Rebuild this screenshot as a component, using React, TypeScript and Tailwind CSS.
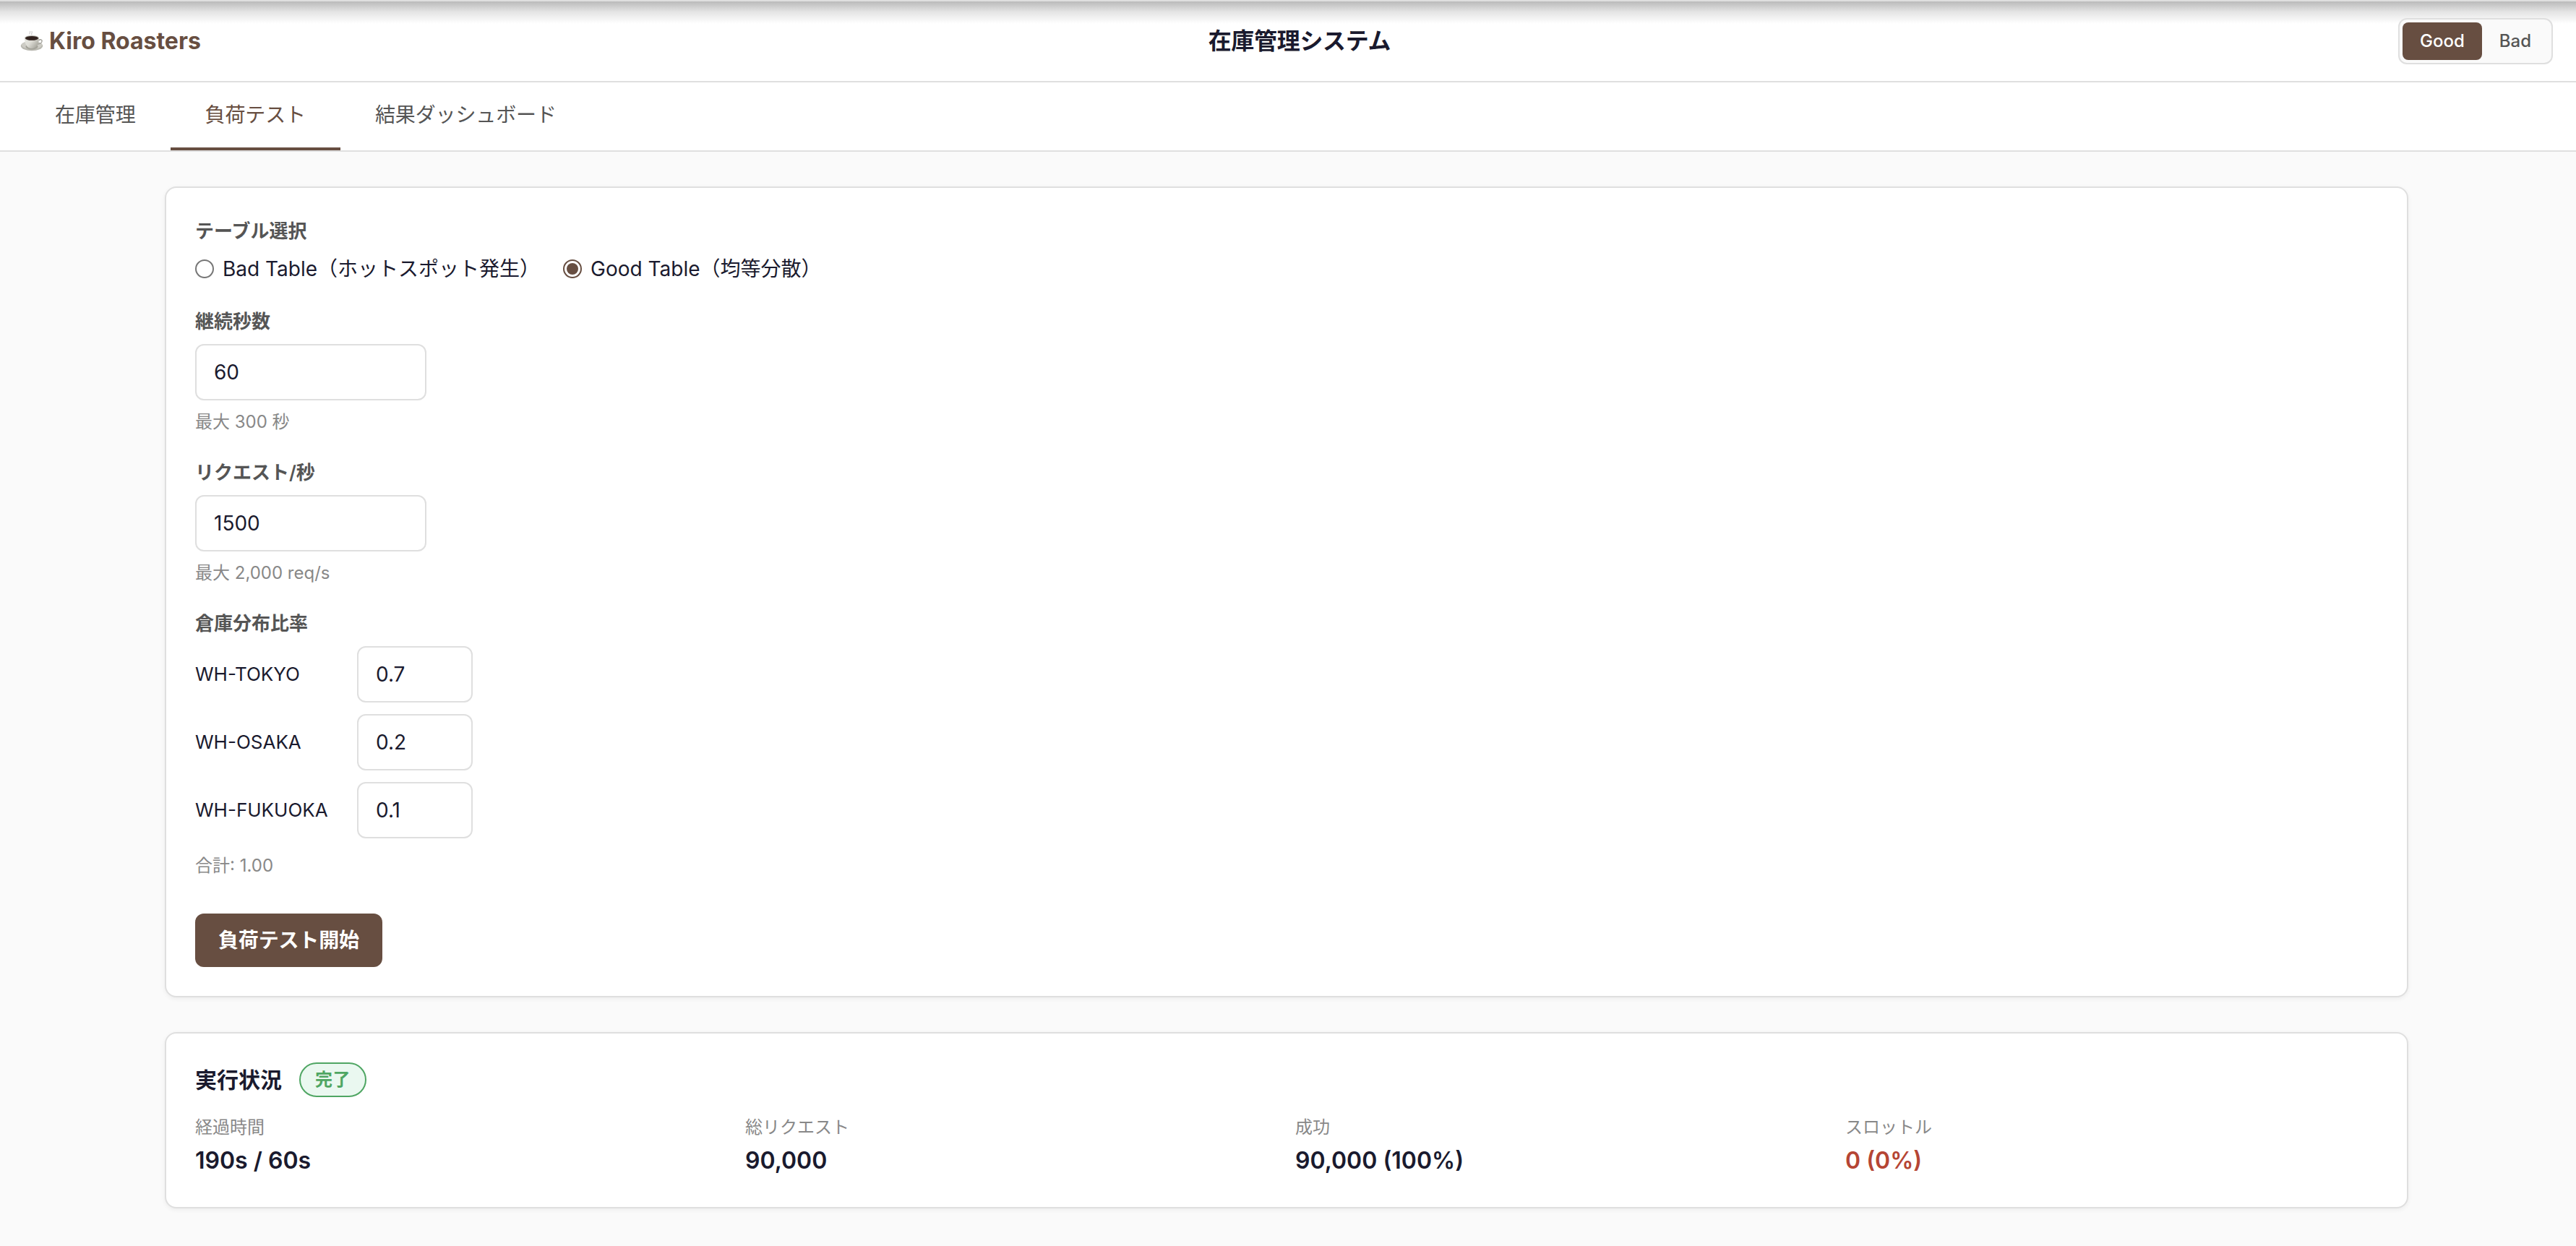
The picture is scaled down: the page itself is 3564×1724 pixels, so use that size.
import React, { useState } from 'react';

interface Warehouse {
    id: string;
    ratio: string;
}

interface Stat {
    label: string;
    value: string;
    danger?: boolean;
}

const tabs = ['在庫管理', '負荷テスト', '結果ダッシュボード'];

const stats: Stat[] = [
    { label: '経過時間', value: '190s / 60s' },
    { label: '総リクエスト', value: '90,000' },
    { label: '成功', value: '90,000 (100%)' },
    { label: 'スロットル', value: '0 (0%)', danger: true },
];

const CoffeeIcon = () => (
    <svg width="32" height="30" viewBox="0 0 32 30" fill="none" className="shrink-0">
        <defs>
            <linearGradient id="cup" x1="0" y1="0" x2="1" y2="0.6">
                <stop offset="0" stopColor="#e9e9e4" />
                <stop offset="0.5" stopColor="#dddcd5" />
                <stop offset="1" stopColor="#a9a89f" />
            </linearGradient>
        </defs>
        {/* steam */}
        <path d="M13 5c-1-1.500 1.500-2 .5-3.500M16 6c-1.500-2 1.500-2.500 0-4.500" stroke="#cfcfcf" strokeWidth="1.200" strokeLinecap="round" />
        {/* saucer */}
        <ellipse cx="16" cy="21.500" rx="15.200" ry="6.800" fill="#b9b8b0" />
        <ellipse cx="16" cy="20.300" rx="14" ry="5.500" fill="#cdccc5" />
        <ellipse cx="16" cy="22.500" rx="8.500" ry="4" fill="#a3a299" />
        {/* cup */}
        <path d="M25.500 14c2-2 5-1.500 4.600 1-.4 2.500-3.200 3.800-6 4" stroke="#9c9b93" strokeWidth="1.300" />
        <path d="M6 10.500c0 8.500 3.500 14.500 10 14.500s10-6 10-14.500z" fill="url(#cup)" />
        <ellipse cx="16" cy="10.500" rx="10" ry="3.600" fill="#bdbcb4" />
        <ellipse cx="16" cy="10.900" rx="9" ry="2.900" fill="#32231f" />
    </svg>
);

const Card: React.FC<{ children: React.ReactNode }> = ({ children }) => (
    <section className="rounded-2xl border-2 border-[#dfdfdf] bg-white p-10 shadow-[0_2px_6px_rgba(0,0,0,0.06)]">
        {children}
    </section>
);

const FieldLabel: React.FC<{ children: React.ReactNode }> = ({ children }) => (
    <div className="mb-3 text-[26px] leading-[39px] font-semibold text-[#555555]">{children}</div>
);

const Hint: React.FC<{ children: React.ReactNode }> = ({ children }) => (
    <div className="text-2xl leading-9 text-[#888888]">{children}</div>
);

interface NumberInputProps {
    value: string;
    onChange: (value: string) => void;
    label: string;
    small?: boolean;
}

const NumberInput: React.FC<NumberInputProps> = ({ value, onChange, label, small }) => (
    <input
        type="text"
        aria-label={label}
        value={value}
        onChange={e => onChange(e.target.value)}
        className={`block h-[78px] rounded-xl border-2 border-[#dfdfdf] bg-white px-6 text-[28px] text-[#1a1a2e] outline-none ${small ? 'w-40' : 'w-80'}`}
    />
);

interface RadioProps {
    checked: boolean;
    onSelect: () => void;
    children: React.ReactNode;
}

const Radio: React.FC<RadioProps> = ({ checked, onSelect, children }) => (
    <button type="button" role="radio" aria-checked={checked} onClick={onSelect} className="flex items-center gap-3 whitespace-nowrap">
        <span className={`flex size-[26px] items-center justify-center rounded-full border-2 ${checked ? 'border-[#674e41]' : 'border-[#767676]'}`}>
            {checked && <span className="size-4 rounded-full bg-[#674e41]" />}
        </span>
        <span>{children}</span>
    </button>
);

const App: React.FC = () => {
    const [mode, setMode] = useState('Good');
    const [activeTab, setActiveTab] = useState('負荷テスト');
    const [table, setTable] = useState('good');
    const [duration, setDuration] = useState('60');
    const [rate, setRate] = useState('1500');
    const [warehouses, setWarehouses] = useState<Warehouse[]>([
        { id: 'WH-TOKYO', ratio: '0.7' },
        { id: 'WH-OSAKA', ratio: '0.2' },
        { id: 'WH-FUKUOKA', ratio: '0.1' },
    ]);

    const total = warehouses.reduce((sum, w) => sum + (Number(w.ratio) || 0), 0);

    const updateRatio = (id: string, ratio: string) => {
        setWarehouses(prev => prev.map(w => (w.id === id ? { ...w, ratio } : w)));
    };

    return (
        <div lang="ja" className="min-h-[1724px] bg-[#fafafa] font-['Inter','Noto_Sans_CJK_JP',sans-serif] text-[28px] leading-[42px] text-[#1a1a2e]">
            <div className="bg-white">
                <header className="flex h-[114px] items-center justify-between border-t-2 border-b-2 border-[#dfdfdf] bg-linear-to-b from-[#bababa] via-[#e4e4e4] via-[13%] to-white to-[28%] pr-8 pl-7">
                    <div className="flex items-center gap-2 text-[32px] leading-[48px] font-bold text-[#674e41]">
                        <CoffeeIcon />
                        <span>Kiro Roasters</span>
                    </div>
                    <h1 className="text-[32px] leading-[48px] font-semibold tracking-[-0.01em]">在庫管理システム</h1>
                    <div className="flex h-16 rounded-xl border-2 border-[#dfdfdf] bg-[#fafafa] p-1">
                        {['Good', 'Bad'].map(m => (
                            <button
                                key={m}
                                type="button"
                                onClick={() => setMode(m)}
                                className={`rounded-lg px-6 text-2xl font-medium ${mode === m ? 'bg-[#674e41] text-white' : 'text-[#555555]'}`}
                            >
                                {m}
                            </button>
                        ))}
                    </div>
                </header>
                <nav className="flex h-24 border-b-2 border-[#dfdfdf] pl-7">
                    {tabs.map(tab => (
                        <button
                            key={tab}
                            type="button"
                            onClick={() => setActiveTab(tab)}
                            className={`border-b-4 px-12 tracking-[-0.12px] ${activeTab === tab ? 'border-[#674e41] text-[#674e41]' : 'border-transparent text-[#555555]'}`}
                        >
                            {tab}
                        </button>
                    ))}
                </nav>
            </div>

            <main className="ml-[228px] flex w-[3104px] flex-col gap-12 pt-12">
                <Card>
                    <div className="mb-8">
                        <FieldLabel>テーブル選択</FieldLabel>
                        <div className="flex gap-8">
                            <Radio checked={table === 'bad'} onSelect={() => setTable('bad')}>Bad Table（ホットスポット発生）</Radio>
                            <Radio checked={table === 'good'} onSelect={() => setTable('good')}>Good Table（均等分散）</Radio>
                        </div>
                    </div>

                    <div className="mb-8">
                        <FieldLabel>継続秒数</FieldLabel>
                        <NumberInput label="継続秒数" value={duration} onChange={setDuration} />
                        <div className="pt-3">
                            <Hint>最大 300 秒</Hint>
                        </div>
                    </div>

                    <div className="mb-8">
                        <FieldLabel>リクエスト/秒</FieldLabel>
                        <NumberInput label="リクエスト/秒" value={rate} onChange={setRate} />
                        <div className="pt-3">
                            <Hint>最大 2,000 req/s</Hint>
                        </div>
                    </div>

                    <div className="mb-12">
                        <FieldLabel>倉庫分布比率</FieldLabel>
                        <div className="flex flex-col gap-4">
                            {warehouses.map(w => (
                                <div key={w.id} className="flex items-center gap-6">
                                    <span className="w-[200px] text-[26px]">{w.id}</span>
                                    <NumberInput small label={w.id} value={w.ratio} onChange={v => updateRatio(w.id, v)} />
                                </div>
                            ))}
                        </div>
                        <div className="pt-5">
                            <Hint>合計: {total.toFixed(2)}</Hint>
                        </div>
                    </div>

                    <button type="button" className="block h-[74px] rounded-xl bg-[#674e41] px-8 font-semibold tracking-[-0.16px] text-white">負荷テスト開始</button>
                </Card>

                <Card>
                    <div className="mb-6 flex h-12 items-center gap-6">
                        <h2 className="text-[30px] font-semibold">実行状況</h2>
                        <span className="flex h-12 items-center rounded-full border-2 border-[#4fa663] bg-[#eaf8f0] px-5 text-2xl font-semibold tracking-[0.02em] text-[#4fa663]">完了</span>
                    </div>
                    <div className="grid grid-cols-4 gap-6">
                        {stats.map(stat => (
                            <div key={stat.label}>
                                <Hint>{stat.label}</Hint>
                                <div className={`mt-1 text-[32px] leading-[48px] font-semibold ${stat.danger ? 'text-[#b54534]' : ''}`}>{stat.value}</div>
                            </div>
                        ))}
                    </div>
                </Card>
            </main>
        </div>
    );
};

export default App;
